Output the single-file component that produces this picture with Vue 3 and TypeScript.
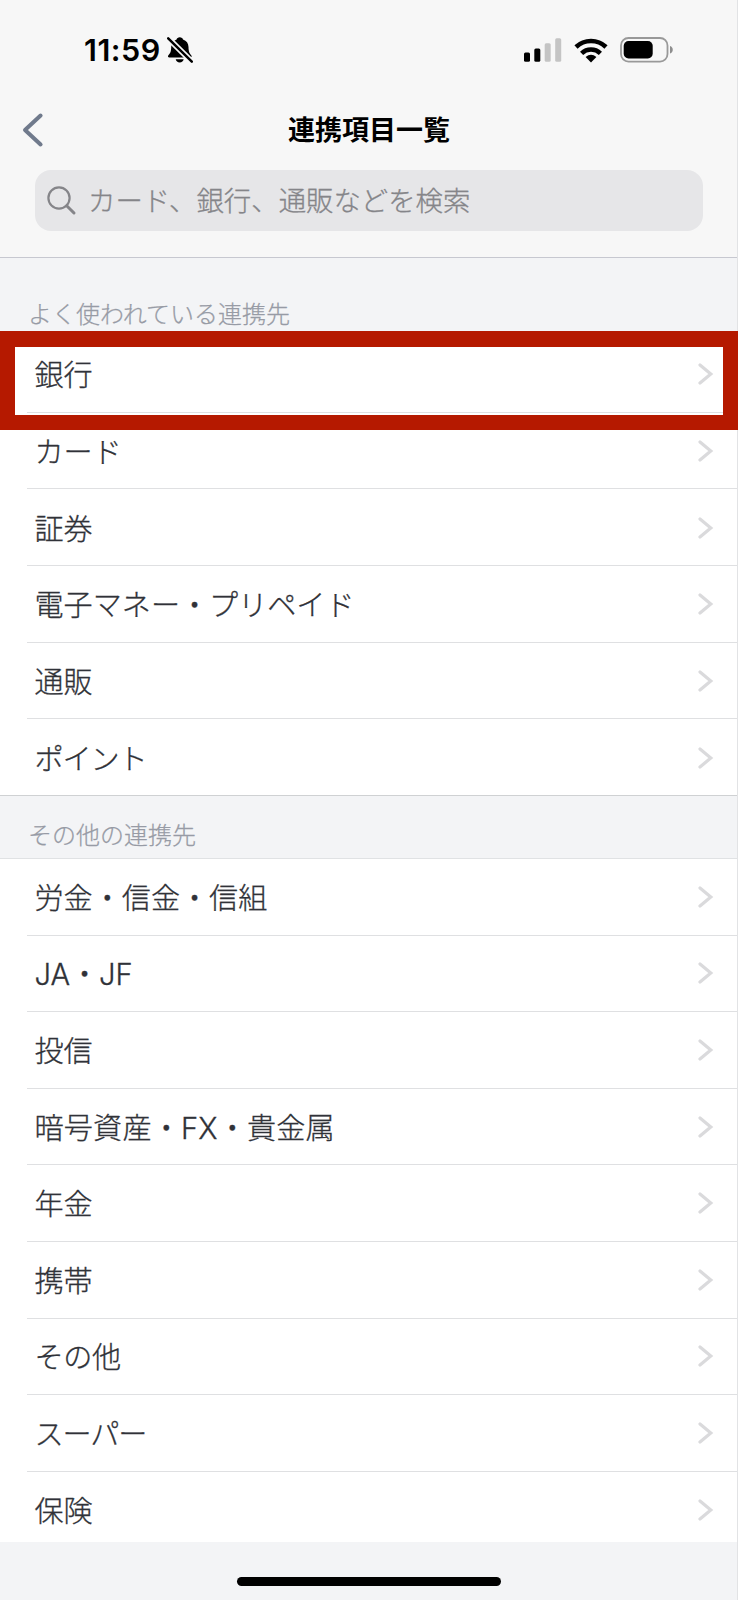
<script setup lang="ts">
interface LinkItem {
  label: string
  spacing?: 'snug' | 'tight' | 'loose'
}

interface LinkSection {
  id: string
  title: string
  items: LinkItem[]
}

const sections: LinkSection[] = [
  {
    id: 'popular',
    title: 'よく使われている連携先',
    items: [
      { label: '銀行' },
      { label: 'カード' },
      { label: '証券' },
      { label: '電子マネー・プリペイド' },
      { label: '通販' },
      { label: 'ポイント', spacing: 'tight' },
    ],
  },
  {
    id: 'others',
    title: 'その他の連携先',
    items: [
      { label: '労金・信金・信組' },
      { label: 'JA・JF' },
      { label: '投信' },
      { label: '暗号資産・FX・貴金属', spacing: 'loose' },
      { label: '年金' },
      { label: '携帯' },
      { label: 'その他', spacing: 'snug' },
      { label: 'スーパー', spacing: 'tight' },
      { label: '保険' },
    ],
  },
]
</script>

<template>
  <div class="screen">
    <header class="top">
      <div class="status">
        <div class="clock">
          <span class="time">11:59</span>
          <svg class="bell" width="26" height="28" viewBox="0 0 26 28">
            <path d="M12.8 1.2c1.7 0 2.9 1 3.2 2.2 3.6 1.1 5.4 4 5.5 7.6.1 4.800 1 6.200 2.700 8.200.9 1.200.5 2.300-.9 2.300H2.400c-1.400 0-1.900-1.100-1-2.300 1.800-2 2.700-3.400 2.800-8.200.1-3.600 1.900-6.500 5.400-7.600.3-1.200 1.500-2.200 3.200-2.200z" />
            <path d="M8.700 23.300h8c-.3 1.900-1.900 3.100-4 3.100s-3.700-1.200-4-3.100z" />
            <path class="gap" d="M1.200 2.400L24.800 25.600" />
            <path class="slash" d="M1.200 2.400L24.800 25.600" />
          </svg>
        </div>
        <div class="indicators">
          <svg width="38" height="25" viewBox="0 0 38 25">
            <rect x="0" y="14.500" width="6" height="9.300" rx="1.500" />
            <rect x="10.300" y="10.500" width="6" height="13.300" rx="1.500" />
            <rect class="dim" x="20.700" y="5.300" width="6" height="18.500" rx="1.500" />
            <rect class="dim" x="31.200" y="0.300" width="6" height="23.500" rx="1.500" />
          </svg>
          <svg class="wifi" width="34" height="25" viewBox="0 0 34 25">
            <path class="arc" d="M2 9A21.800 21.800 0 0 1 32 9" />
            <path class="arc" d="M7.600 15.300A13.700 13.700 0 0 1 26.400 15.300" />
            <path d="M17 24.500L11.600 19Q17 14.600 22.400 19z" />
          </svg>
          <svg class="battery" width="54" height="26" viewBox="0 0 54 26">
            <rect class="shell" x="1" y="1" width="46.500" height="23.600" rx="7.500" />
            <rect x="3.700" y="4" width="29" height="17.500" rx="4.800" />
            <path class="tip" d="M50 9c3.700 1 3.700 6.500 0 7.500z" />
          </svg>
        </div>
      </div>
      <div class="nav">
        <svg class="back" width="22" height="36" viewBox="0 0 22 36">
          <path d="M18.600 3.500L3 18L18.600 32.500" />
        </svg>
        <h1>連携項目一覧</h1>
      </div>
      <div class="search">
        <svg width="30" height="30" viewBox="0 0 30 30">
          <circle cx="12" cy="12" r="10.600" />
          <path d="M19.700 19.700L27 27" />
        </svg>
        <span>カード、銀行、通販などを検索</span>
      </div>
    </header>
    <main>
      <section v-for="section in sections" :key="section.id" :class="section.id">
        <h2>{{ section.title }}</h2>
        <ul>
          <li v-for="item in section.items" :key="item.label">
            <span :class="item.spacing">{{ item.label }}</span>
            <svg width="16" height="24" viewBox="0 0 16 24">
              <path d="M2 3L12.800 12L2 21" />
            </svg>
          </li>
        </ul>
      </section>
    </main>
    <footer><div class="home"></div></footer>
    <div class="highlight"></div>
    <div class="edge"></div>
  </div>
</template>

<style>
body {
  background: #f3f4f6;
}
</style>

<style scoped>
.screen {
  position: relative;
  width: 738px;
  height: 1600px;
  overflow: hidden;
  background: #f3f4f6;
  font-family: Inter, "Noto Sans CJK JP", sans-serif;
  font-weight: 300;
  display: flex;
  flex-direction: column;
}
.top {
  box-sizing: border-box;
  height: 258px;
  flex: none;
  background: #f7f7f7;
  border-bottom: 1px solid #c7c8d0;
}
.status {
  height: 96px;
  display: flex;
  align-items: center;
  justify-content: space-between;
  padding: 4px 64px 0 84px;
  box-sizing: border-box;
}
.clock,
.indicators {
  display: flex;
  align-items: center;
}
.time {
  font-size: 30.5px;
  font-weight: 600;
  letter-spacing: 0.5px;
  line-height: 36px;
  width: 83px;
}
.bell .gap {
  stroke: #f7f7f7;
  stroke-width: 5.8;
}
.bell .slash {
  stroke: #000;
  stroke-width: 2.5;
  stroke-linecap: round;
}
.dim {
  fill: #c4c4c4;
}
.wifi {
  margin-left: 12px;
}
.arc {
  fill: none;
  stroke: #000;
  stroke-width: 4.6;
}
.battery {
  margin-left: 12px;
}
.shell {
  fill: none;
  stroke: #999;
  stroke-width: 1.8;
}
.tip {
  fill: #8e8e8e;
}
.nav {
  position: relative;
  height: 74px;
  display: flex;
  align-items: center;
  justify-content: center;
  padding-bottom: 4px;
  box-sizing: border-box;
}
.back {
  position: absolute;
  left: 22px;
  top: 16px;
  fill: none;
  stroke: #707a8c;
  stroke-width: 4;
  stroke-linecap: round;
  stroke-linejoin: round;
}
h1 {
  margin: 0;
  font-size: 27px;
  line-height: 40px;
  font-weight: 600;
}
.search {
  height: 61px;
  margin: 0 35px;
  border-radius: 16px;
  background: #e6e6e8;
  display: flex;
  align-items: center;
  gap: 11px;
  padding-left: 12px;
  font-size: 27.4px;
  line-height: 40px;
  color: #858589;
  -webkit-text-stroke: 0.3px #858589;
  box-sizing: border-box;
}
.search span {
  padding-top: 1px;
}
.search svg {
  fill: none;
  stroke: #858589;
  stroke-width: 2.2;
  stroke-linecap: round;
}
.search path {
  stroke-width: 3;
}
h2 {
  margin: 0;
  padding-left: 28px;
  box-sizing: border-box;
  font-size: 24px;
  line-height: 34px;
  font-weight: 300;
  color: #979ba5;
  -webkit-text-stroke: 0.25px #979ba5;
}
.popular h2 {
  height: 78px;
  padding-top: 40px;
}
.others h2 {
  height: 63px;
  padding-top: 23px;
  border-top: 1px solid #cfd1d3;
}
ul {
  margin: 0;
  padding: 0;
  list-style: none;
  background: #fff;
  overflow: hidden;
}
.popular ul {
  height: 459px;
}
.others ul {
  height: 684px;
  border-top: 1px solid #e0e2e4;
  box-sizing: border-box;
}
li {
  height: 76.700px;
  box-sizing: border-box;
  margin-left: 27px;
  padding: 1px 24px 0 7.500px;
  display: flex;
  align-items: center;
  justify-content: space-between;
  border-bottom: 1px solid #dfe0e2;
  font-size: 29.1px;
  line-height: 42px;
  color: #303238;
  -webkit-text-stroke: 0.3px #303238;
}
.others li {
  height: 76.600px;
  padding-top: 0;
}
li:last-child {
  border-bottom-color: transparent;
}
li span {
  padding-top: 4px;
}
.snug {
  letter-spacing: -0.4px;
}
.tight {
  letter-spacing: -1.1px;
}
.loose {
  letter-spacing: 0.2px;
}
li svg {
  fill: none;
  stroke: #dadadc;
  stroke-width: 3.2;
  stroke-linecap: round;
}
footer {
  flex: 1;
  display: flex;
  justify-content: center;
  align-items: flex-start;
  padding-top: 35px;
}
.home {
  width: 264px;
  height: 9px;
  border-radius: 5px;
  background: #000;
}
.highlight {
  position: absolute;
  left: 0;
  top: 331px;
  width: 738px;
  height: 99px;
  box-sizing: border-box;
  border: solid #b51900;
  border-width: 16px 15px 15px;
}
.edge {
  position: absolute;
  top: 0;
  right: 0;
  width: 1px;
  height: 331px;
  background: #e2e3e5;
  box-shadow: 0 430px #e2e3e5, 0 761px #e2e3e5, 0 1092px #e2e3e5, 0 1269px #e2e3e5;
}
</style>
